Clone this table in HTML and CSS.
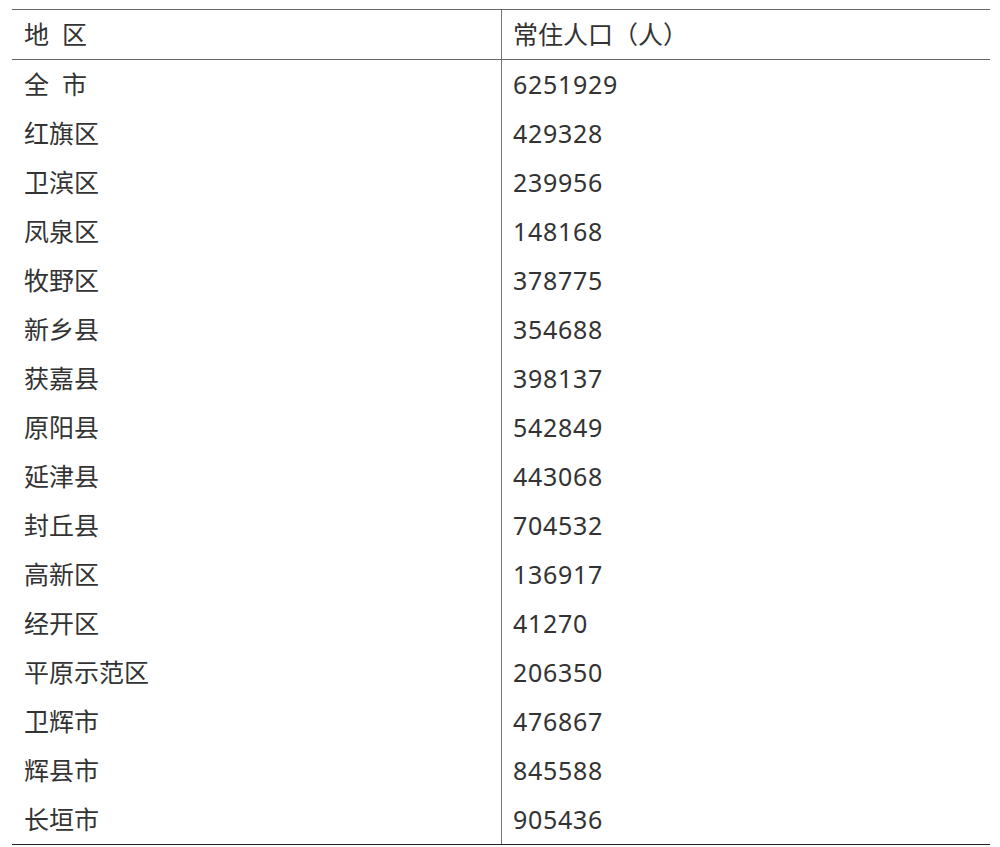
FILE: index.html
```html
<!DOCTYPE html>
<html lang="zh">
<head>
<meta charset="utf-8">
<link rel="stylesheet" href="styles.css">
</head>
<body>
<div class="pop">
  <div class="row head"><div class="c1">地&nbsp;&nbsp;区</div><div class="c2">常住人口（人）</div></div>
  <div class="row"><div class="c1">全&nbsp;&nbsp;市</div><div class="c2 num">6251929</div></div>
  <div class="row"><div class="c1">红旗区</div><div class="c2 num">429328</div></div>
  <div class="row"><div class="c1">卫滨区</div><div class="c2 num">239956</div></div>
  <div class="row"><div class="c1">凤泉区</div><div class="c2 num">148168</div></div>
  <div class="row"><div class="c1">牧野区</div><div class="c2 num">378775</div></div>
  <div class="row"><div class="c1">新乡县</div><div class="c2 num">354688</div></div>
  <div class="row"><div class="c1">获嘉县</div><div class="c2 num">398137</div></div>
  <div class="row"><div class="c1">原阳县</div><div class="c2 num">542849</div></div>
  <div class="row"><div class="c1">延津县</div><div class="c2 num">443068</div></div>
  <div class="row"><div class="c1">封丘县</div><div class="c2 num">704532</div></div>
  <div class="row"><div class="c1">高新区</div><div class="c2 num">136917</div></div>
  <div class="row"><div class="c1">经开区</div><div class="c2 num">41270</div></div>
  <div class="row"><div class="c1">平原示范区</div><div class="c2 num">206350</div></div>
  <div class="row"><div class="c1">卫辉市</div><div class="c2 num">476867</div></div>
  <div class="row"><div class="c1">辉县市</div><div class="c2 num">845588</div></div>
  <div class="row"><div class="c1">长垣市</div><div class="c2 num">905436</div></div>
</div>
</body>
</html>
```
FILE: styles.css
```css
html, body {
  margin: 0;
  padding: 0;
  background: #fff;
}
body {
  padding: 9px 0 0 12px;
  font-family: "Noto Sans", "Noto Sans CJK SC", sans-serif;
  color: #333;
}
.pop {
  width: 978px;
  border-top: 1px solid #666;
  border-bottom: 1px solid #222;
}
.row {
  display: grid;
  grid-template-columns: 490px 1fr;
  height: 49px;
  font-size: 25px;
  line-height: 1;
}
.row.head {
  height: 50px;
  border-bottom: 1px solid #666;
  box-sizing: border-box;
}
.c1, .c2 {
  display: flex;
  align-items: center;
}
.c1 {
  padding-left: 12px;
  border-right: 1px solid #777;
  box-sizing: border-box;
}
.c2 {
  padding-left: 11px;
}
.num {
  letter-spacing: 0.7px;
}
```
